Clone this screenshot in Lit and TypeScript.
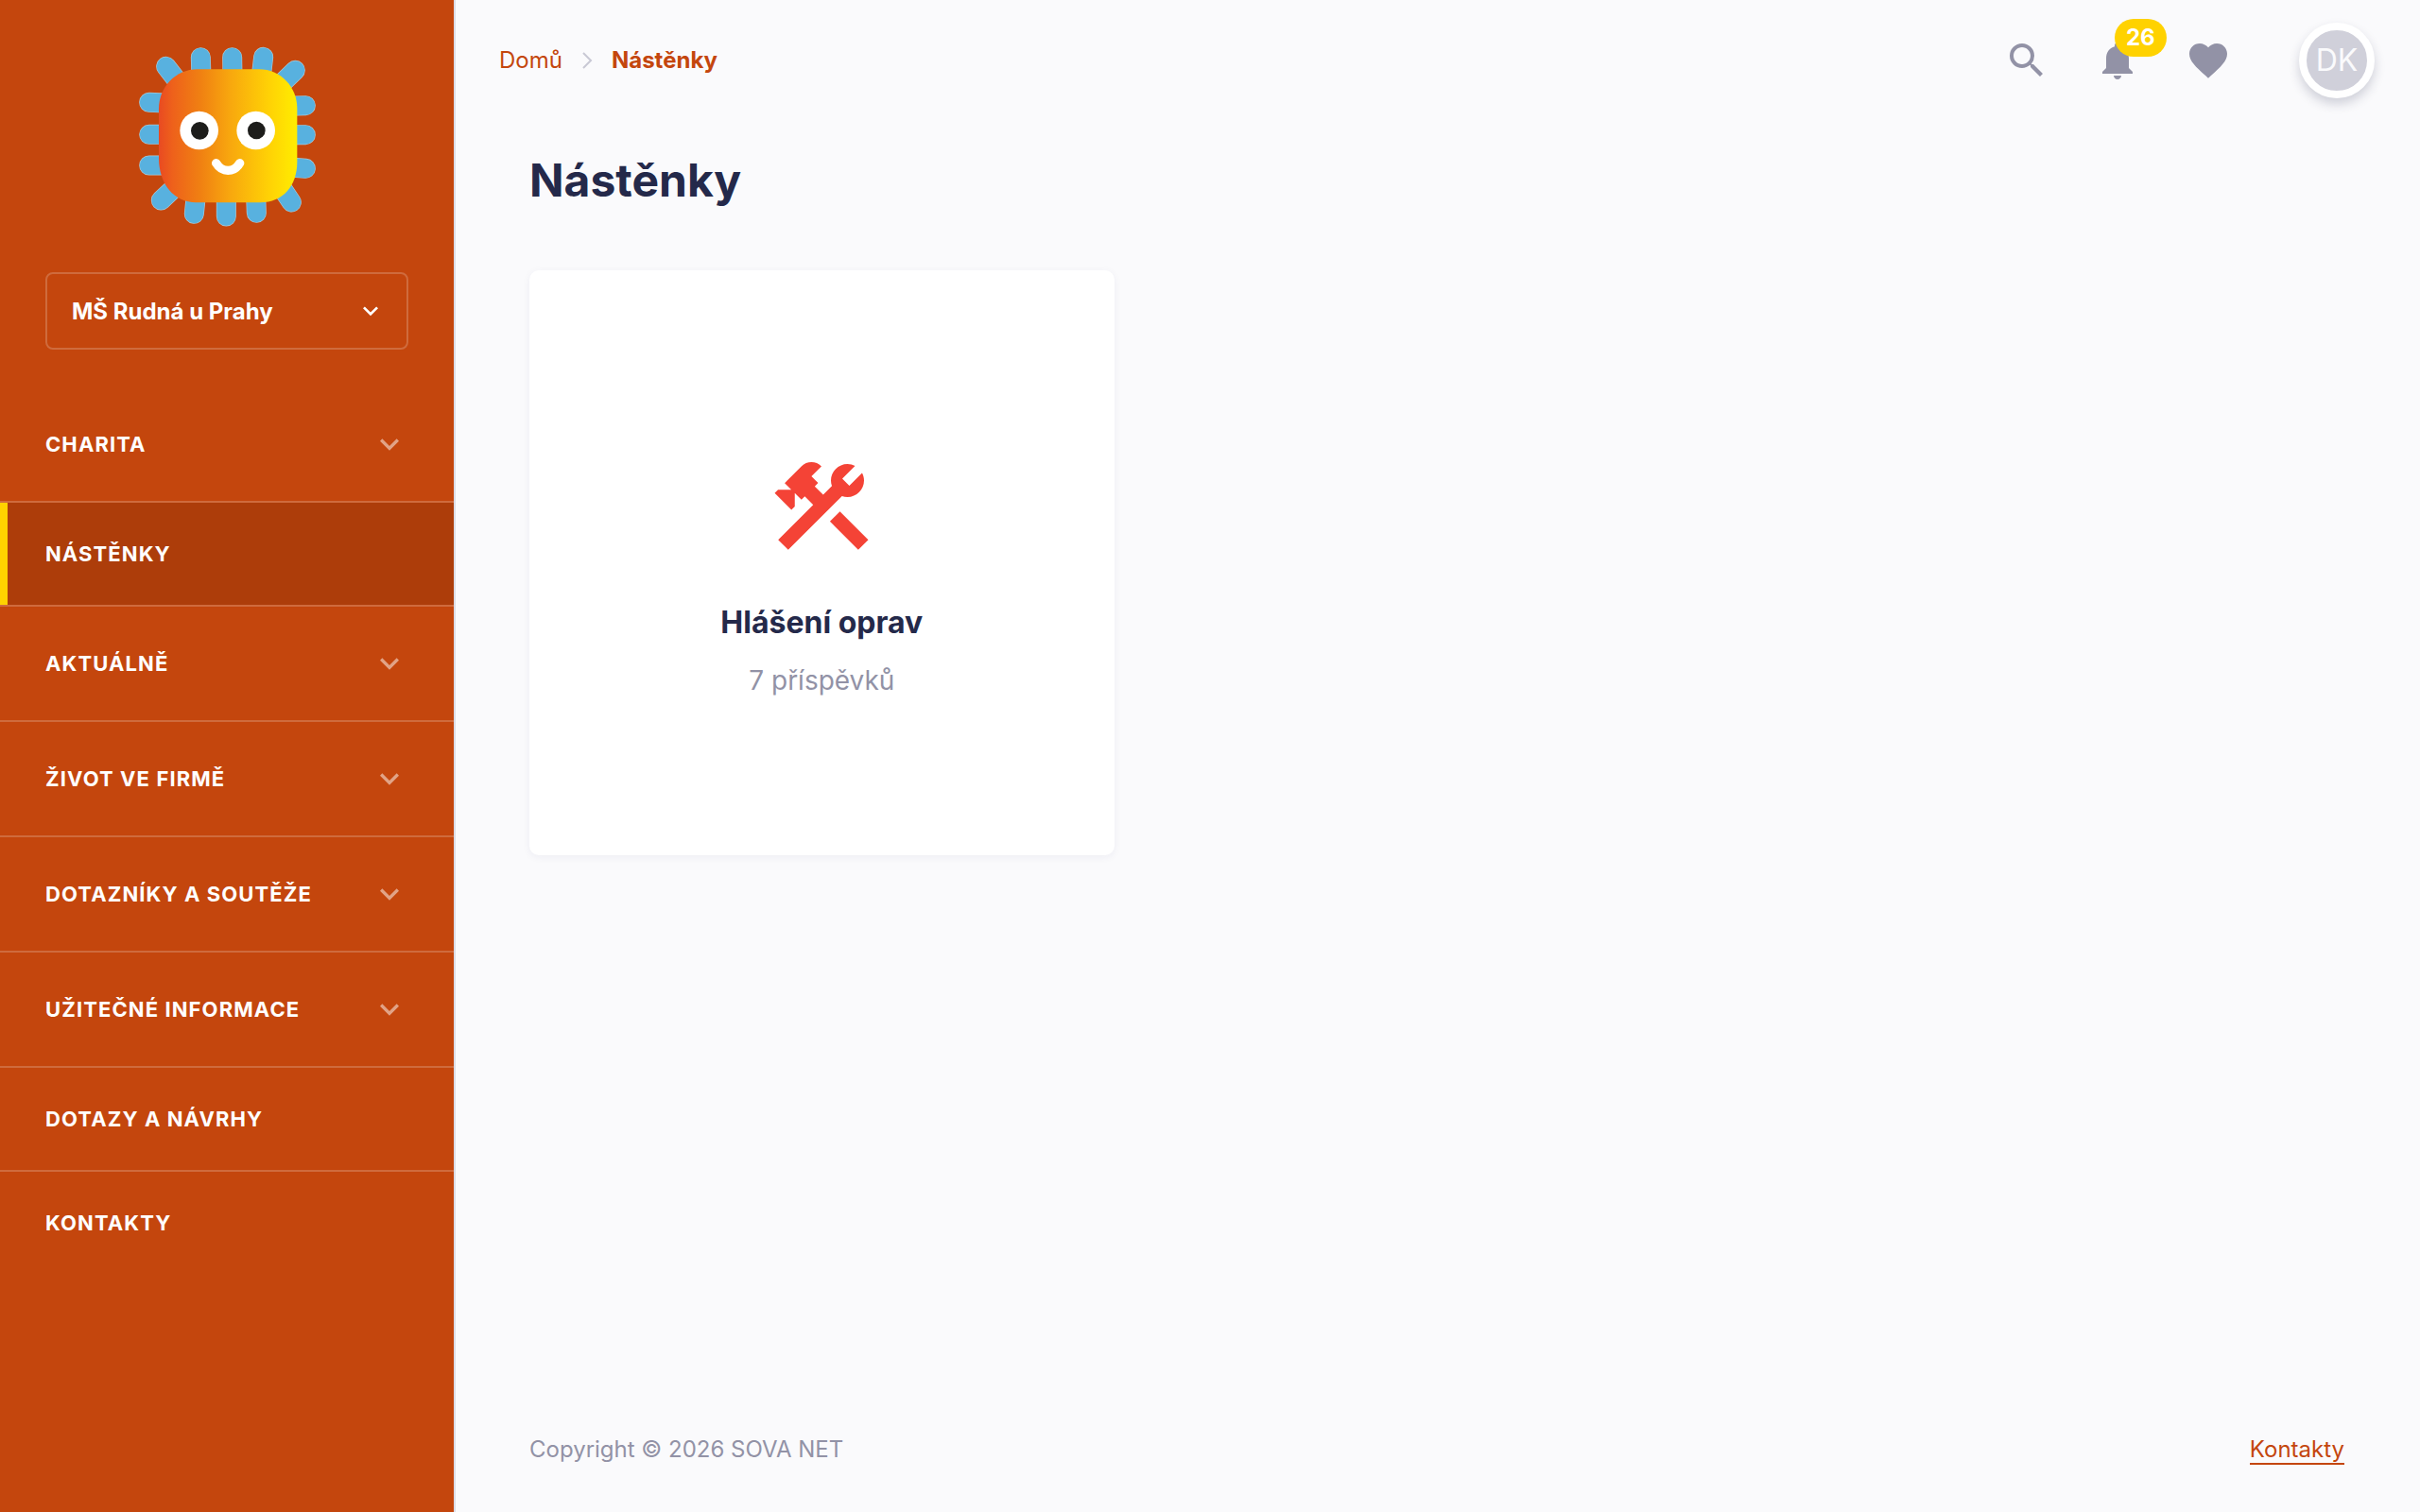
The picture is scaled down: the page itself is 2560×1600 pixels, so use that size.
import { LitElement, html, css, svg } from "lit";
import { customElement, property } from "lit/decorators.js";
import { classMap } from "lit/directives/class-map.js";

const icons = {
  chevronDown: svg`<path d="M16.59 8.59 12 13.17 7.41 8.59 6 10l6 6 6-6z"/>`,
  search: svg`<path d="M15.5 14h-.79l-.28-.27A6.471 6.471 0 0 0 16 9.5 6.5 6.5 0 1 0 9.5 16c1.61 0 3.09-.59 4.23-1.57l.27.28v.79l5 4.99L20.49 19l-4.99-5zm-6 0C7.01 14 5 11.99 5 9.5S7.01 5 9.5 5 14 7.01 14 9.5 11.99 14 9.5 14z"/>`,
  bell: svg`<path d="M12 22c1.1 0 2-.9 2-2h-4c0 1.1.89 2 2 2zm6-6v-5c0-3.07-1.64-5.64-4.5-6.32V4c0-.83-.67-1.5-1.5-1.5s-1.5.67-1.5 1.5v.68C7.63 5.36 6 7.92 6 11v5l-2 2v1h16v-1l-2-2z"/>`,
  heart: svg`<path d="m12 21.35-1.45-1.32C5.4 15.36 2 12.28 2 8.5 2 5.42 4.42 3 7.5 3c1.74 0 3.41.81 4.5 2.09C13.09 3.81 14.76 3 16.5 3 19.58 3 22 5.42 22 8.5c0 3.78-3.4 6.86-8.55 11.54L12 21.35z"/>`,
  construction: svg`<rect height="8.48" transform="matrix(0.7071 -0.7071 0.7071 0.7071 -6.8717 17.6255)" width="3" x="16.34" y="12.87"/><path d="M17.5,10c1.93,0,3.5-1.57,3.5-3.5c0-0.58-0.16-1.12-0.41-1.6l-2.7,2.7L16.4,6.11l2.7-2.7C18.62,3.16,18.08,3,17.5,3 C15.57,3,14,4.57,14,6.5c0,0.41,0.08,0.8,0.21,1.16l-1.85,1.85l-1.78-1.78l0.71-0.71L9.88,5.61L12,3.49 c-1.17-1.17-3.07-1.17-4.24,0L4.22,7.03l1.41,1.41H2.81L2.1,9.15l3.54,3.54l0.71-0.71V9.15l1.41,1.41l0.71-0.71l1.78,1.78 l-7.41,7.41l2.12,2.12L16.34,9.79C16.7,9.92,17.09,10,17.5,10z"/>`,
};

type IconName = keyof typeof icons;

@customElement("app-icon")
export class AppIcon extends LitElement {
  static styles = css`
    :host {
      display: block;
      flex: none;
    }
    .glyph {
      display: block;
      width: 100%;
      height: 100%;
      fill: currentColor;
    }
  `;

  @property() name: IconName = "search";

  render() {
    return html`<svg class="glyph" viewBox="0 0 24 24" aria-hidden="true">${icons[this.name]}</svg>`;
  }
}

const rays =
  "M249 160 247 92M348 160 347 92M438 160 446 91M180 176 137 121M488 190 547 133" +
  "M150 238 83 235M150 337 83 337M150 435 83 435M520 247 580 245M520 338 580 338M520 440 580 445" +
  "M170 500 121 546M232 530 226 589M328 530 328 597M422 530 424 586M500 500 535 552";

@customElement("app-logo")
export class AppLogo extends LitElement {
  static styles = css`
    :host {
      display: block;
    }
    .logo {
      display: block;
      width: 100%;
      height: 100%;
    }
  `;

  render() {
    return html`
      <svg class="logo" viewBox="0 0 660 660" role="img" aria-label="Logo">
        <defs>
          <linearGradient id="body" x1="0" x2="1" y1="0" y2="0">
            <stop offset="0" stop-color="#e94a22" />
            <stop offset="0.1" stop-color="#ee611b" />
            <stop offset="0.3" stop-color="#f08012" />
            <stop offset="0.52" stop-color="#f8a80e" />
            <stop offset="0.8" stop-color="#ffd205" />
            <stop offset="1" stop-color="#ffed00" />
          </linearGradient>
        </defs>
        <g fill="none" stroke-linecap="round">
          <path d=${rays} stroke="#a9c9d6" stroke-width="63" />
          <path d=${rays} stroke="#58b1df" stroke-width="59" />
        </g>
        <path
          d="M236 130H432C500 130 553 186 553 254V424C553 500 508 553 436 553H232C162 553 114 494 114 412V256C114 186 168 130 236 130Z"
          fill="url(#body)"
        />
        <circle cx="242" cy="324" r="61" fill="#fff" />
        <circle cx="422" cy="324" r="61" fill="#fff" />
        <circle cx="244" cy="325" r="28" fill="#1d1d1b" />
        <circle cx="424" cy="324" r="28" fill="#1d1d1b" />
        <path
          d="M296 428C315 459 352 459 371 428"
          fill="none"
          stroke="#fff"
          stroke-width="28"
          stroke-linecap="round"
        />
      </svg>
    `;
  }
}

interface MenuItem {
  label: string;
  expandable?: boolean;
  active?: boolean;
}

const menu: MenuItem[] = [
  { label: "Charita", expandable: true },
  { label: "Nástěnky", active: true },
  { label: "Aktuálně", expandable: true },
  { label: "Život ve firmě", expandable: true },
  { label: "Dotazníky a soutěže", expandable: true },
  { label: "Užitečné informace", expandable: true },
  { label: "Dotazy a návrhy" },
  { label: "Kontakty" },
];

@customElement("app-sidebar")
export class AppSidebar extends LitElement {
  static styles = css`
    :host {
      display: flex;
      flex-direction: column;
      box-sizing: border-box;
      background: #c4460d;
      color: #fff;
    }
    .home {
      align-self: center;
      margin: 30px 0 38px;
    }
    .logo {
      width: 220px;
      height: 220px;
    }
    .picker {
      display: grid;
      align-items: center;
      margin: 0 48px 40px;
    }
    .school {
      grid-area: 1 / 1;
      appearance: none;
      box-sizing: border-box;
      width: 100%;
      height: 82px;
      margin: 0;
      padding: 2px 72px 0 26px;
      border: 2px solid rgba(255, 255, 255, 0.2);
      border-radius: 8px;
      background: transparent;
      color: inherit;
      font: 700 24px/32px Inter, sans-serif;
    }
    .school-arrow {
      grid-area: 1 / 1;
      justify-self: end;
      width: 32px;
      height: 32px;
      margin-right: 24px;
      pointer-events: none;
    }
    .menu {
      margin: 0;
      padding: 0;
      list-style: none;
    }
    .entry + .entry {
      border-top: 2px solid rgba(255, 255, 255, 0.2);
    }
    .item {
      display: flex;
      align-items: center;
      justify-content: space-between;
      box-sizing: border-box;
      width: 100%;
      min-height: 108px;
      padding: 0 48px;
      border: 0;
      background: transparent;
      color: inherit;
      font: 700 22px/32px Inter, sans-serif;
      letter-spacing: 0.05em;
      text-align: left;
      text-decoration: none;
      text-transform: uppercase;
    }
    .expandable {
      min-height: 120px;
    }
    .active {
      padding-left: 40px;
      border-left: 8px solid #ffd200;
      background: #ad3d0a;
    }
    .arrow {
      width: 40px;
      height: 40px;
      opacity: 0.5;
    }
  `;

  private renderItem(item: MenuItem) {
    const classes = classMap({
      item: true,
      expandable: !!item.expandable,
      active: !!item.active,
    });
    return item.expandable
      ? html`<button class=${classes} type="button" aria-expanded="false">
          <span>${item.label}</span><app-icon class="arrow" name="chevronDown"></app-icon>
        </button>`
      : html`<a class=${classes} href="#">${item.label}</a>`;
  }

  render() {
    return html`
      <a class="home" href="#" aria-label="Domů"><app-logo class="logo"></app-logo></a>
      <div class="picker">
        <select class="school" aria-label="Škola">
          <option>MŠ Rudná u Prahy</option>
        </select>
        <app-icon class="school-arrow" name="chevronDown"></app-icon>
      </div>
      <nav>
        <ul class="menu">
          ${menu.map((item) => html`<li class="entry">${this.renderItem(item)}</li>`)}
        </ul>
      </nav>
    `;
  }
}

@customElement("app-topbar")
export class AppTopbar extends LitElement {
  static styles = css`
    :host {
      display: flex;
      align-items: center;
      justify-content: space-between;
      height: 128px;
      padding: 0 48px 0 46px;
    }
    .crumbs {
      display: flex;
      align-items: center;
      gap: 20px;
      font-size: 24px;
      line-height: 32px;
    }
    .crumb {
      color: #c4460d;
      text-decoration: none;
    }
    .current {
      font-weight: 700;
    }
    .separator {
      width: 12px;
      height: 20px;
      fill: none;
      stroke: #c8c8d4;
      stroke-width: 2;
    }
    .tools {
      display: flex;
      align-items: center;
    }
    .tool {
      position: relative;
      display: flex;
      align-items: center;
      justify-content: center;
      width: 96px;
      height: 80px;
      padding: 0;
      border: 0;
      background: transparent;
      color: #9292a6;
    }
    .tool-icon {
      width: 48px;
      height: 48px;
    }
    .badge {
      position: absolute;
      top: -4px;
      left: 45px;
      padding: 0 12px;
      border-radius: 20px;
      background: #ffd200;
      color: #fff;
      font: 700 24px/40px Inter, sans-serif;
    }
    .avatar {
      display: flex;
      align-items: center;
      justify-content: center;
      box-sizing: border-box;
      width: 80px;
      height: 80px;
      margin-left: 48px;
      padding: 0;
      border: 8px solid #fff;
      border-radius: 50%;
      background: #d0d0da;
      box-shadow: 0 6px 12px rgba(36, 41, 74, 0.2);
      color: #fafafc;
      font: 400 32px/40px Inter, sans-serif;
    }
  `;

  render() {
    return html`
      <nav class="crumbs" aria-label="Drobečková navigace">
        <a class="crumb" href="#">Domů</a>
        <svg class="separator" viewBox="0 0 12 20" aria-hidden="true">
          <path d="m2 2 8 8-8 8" />
        </svg>
        <a class="crumb current" href="#" aria-current="page">Nástěnky</a>
      </nav>
      <div class="tools">
        <button class="tool" type="button" aria-label="Hledat">
          <app-icon class="tool-icon" name="search"></app-icon>
        </button>
        <button class="tool" type="button" aria-label="Upozornění: 26">
          <app-icon class="tool-icon" name="bell"></app-icon>
          <span class="badge">26</span>
        </button>
        <button class="tool" type="button" aria-label="Oblíbené">
          <app-icon class="tool-icon" name="heart"></app-icon>
        </button>
        <button class="avatar" type="button">DK</button>
      </div>
    `;
  }
}

const boards: { title: string; count: string; icon: IconName }[] = [
  { title: "Hlášení oprav", count: "7 příspěvků", icon: "construction" },
];

@customElement("app-root")
export class AppRoot extends LitElement {
  static styles = css`
    :host {
      display: grid;
      grid-template-columns: 480px minmax(0, 1fr);
      min-height: 100vh;
      background: #fafafc;
      color: #24294a;
      font-family: Inter, sans-serif;
    }
    .page {
      display: flex;
      flex-direction: column;
      border-left: 2px solid #dcdce6;
    }
    .content {
      flex: 1;
      padding: 32px 80px 48px 78px;
    }
    .title {
      margin: 0 0 64px;
      font-size: 48px;
      font-weight: 700;
      line-height: 62px;
    }
    .boards {
      display: grid;
      grid-template-columns: repeat(3, minmax(0, 1fr));
      gap: 32px;
    }
    .board {
      display: flex;
      flex-direction: column;
      align-items: center;
      justify-content: center;
      box-sizing: border-box;
      aspect-ratio: 1;
      padding-top: 26px;
      border-radius: 10px;
      background: #fff;
      box-shadow: 0 2px 8px rgba(36, 41, 110, 0.06);
      color: inherit;
      text-decoration: none;
    }
    .board-icon {
      width: 120px;
      height: 120px;
      margin-bottom: 43px;
      color: #f44336;
    }
    .board-title {
      margin: 0 0 21px;
      font-size: 32px;
      font-weight: 700;
      line-height: 40px;
    }
    .board-count {
      color: #9292a6;
      font-size: 28px;
      line-height: 40px;
    }
    .footer {
      display: flex;
      align-items: flex-end;
      justify-content: space-between;
      padding: 0 80px 50px 78px;
      color: #9292a6;
      font-size: 24px;
      line-height: 32px;
    }
    .contact {
      border-bottom: 2px solid;
      color: #c4460d;
      line-height: 28px;
      text-decoration: none;
    }
  `;

  render() {
    return html`
      <app-sidebar></app-sidebar>
      <div class="page">
        <app-topbar></app-topbar>
        <main class="content">
          <h1 class="title">Nástěnky</h1>
          <div class="boards">
            ${boards.map(
              (board) => html`
                <a class="board" href="#">
                  <app-icon class="board-icon" name=${board.icon}></app-icon>
                  <h2 class="board-title">${board.title}</h2>
                  <span class="board-count">${board.count}</span>
                </a>
              `,
            )}
          </div>
        </main>
        <footer class="footer">
          <span>Copyright © 2026 SOVA NET</span>
          <a class="contact" href="#">Kontakty</a>
        </footer>
      </div>
    `;
  }
}
